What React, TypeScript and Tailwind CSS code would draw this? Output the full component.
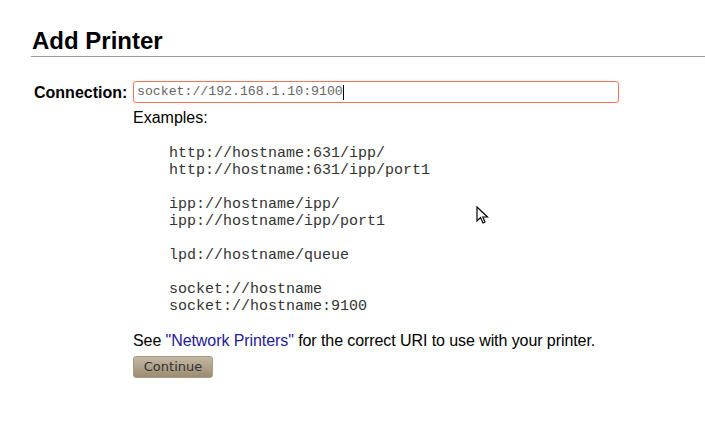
import React from "react";

export default function App() {
  return (
    <div className="relative w-[705px] h-[422px] bg-white overflow-hidden text-black" style={{ fontFamily: '"Liberation Sans", Arial, sans-serif' }}>
      <div className="pl-[31px] pt-[27px]">
        <h1 className="pl-[1px] text-[24px] leading-[28px] font-bold">Add Printer</h1>
        <div className="mt-[1px] h-px bg-[#9a9a9a]" />
        <div className="mt-[24px] flex items-start">
          <div className="w-[102px] pl-[3px] text-[16px] leading-[22px] font-bold pt-[1px]">Connection:</div>
          <div className="flex flex-col">
            <div className="w-[486px] h-[22px] border border-[#ff7256] rounded-[3px] flex items-center pl-[3px]">
              <span className="text-[13.2px] text-[#666]" style={{ fontFamily: '"Liberation Mono", "Courier New", monospace' }}>socket://192.168.1.10:9100</span>
              <span className="w-px h-[15px] bg-black" />
            </div>
            <div className="mt-[5px] text-[16px] leading-[20px]">Examples:</div>
            <pre className="mt-[17px] ml-[36px] text-[15px] leading-[17px] text-[#333]" style={{ fontFamily: '"Liberation Mono", "Courier New", monospace' }}>{`http://hostname:631/ipp/
http://hostname:631/ipp/port1

ipp://hostname/ipp/
ipp://hostname/ipp/port1

lpd://hostname/queue

socket://hostname
socket://hostname:9100`}</pre>
            <p className="mt-[16px] text-[16px] leading-[20px] tracking-[-0.08px]">
              See <a className="text-[#23209a]">"Network Printers"</a> for the correct URI to use with your printer.
            </p>
            <div className="mt-[3px]">
              <button className="w-[80px] h-[22px] rounded-[3px] border border-[#a89a84] bg-gradient-to-b from-[#c4b8a4] to-[#9c8c72] text-[13px] text-[#333] leading-none" style={{ fontFamily: '"DejaVu Sans", sans-serif' }}>Continue</button>
            </div>
          </div>
        </div>
      </div>
      <svg className="absolute left-[476px] top-[206px]" width="14" height="20" viewBox="0 0 14 20">
        <path d="M1 1 L1 15 L4.5 11.5 L7 17 L9 16 L6.8 11 L11.5 11 Z" fill="white" stroke="black" strokeWidth="1.2" strokeLinejoin="miter" />
      </svg>
    </div>
  );
}
